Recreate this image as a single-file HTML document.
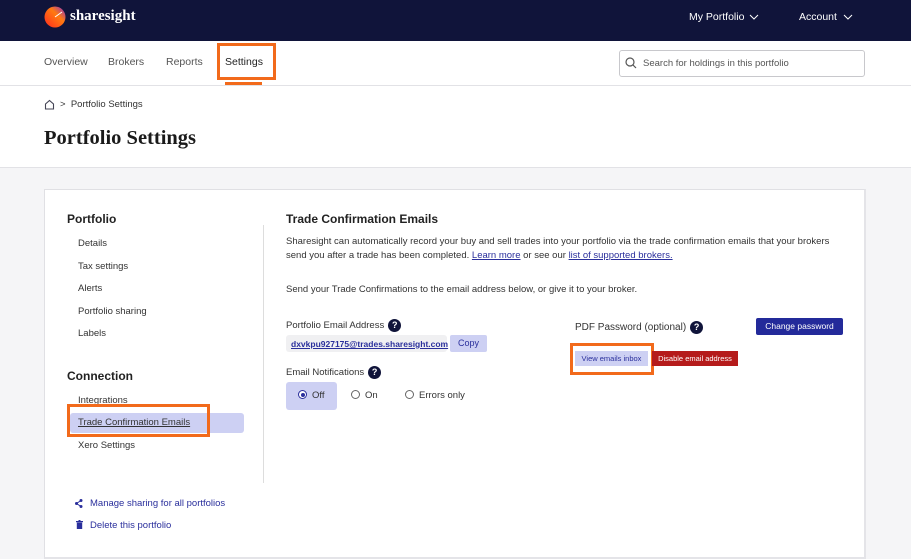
<!DOCTYPE html>
<html><head><style>
*{margin:0;padding:0;box-sizing:border-box}
body{width:911px;height:559px;overflow:hidden;font-family:"Liberation Sans",sans-serif;background:#f5f5f7;position:relative;color:#222}
.a{position:absolute;white-space:nowrap}
.hdr{position:absolute;left:0;top:0;width:911px;height:41px;background:#10143a}
.nav{position:absolute;left:0;top:41px;width:911px;height:45px;background:#fff;border-bottom:1px solid #e2e2e6}
.top{position:absolute;left:0;top:86px;width:911px;height:82px;background:#fff;border-bottom:1px solid #e2e2e6}
.card{position:absolute;left:44px;top:189px;width:822px;height:370px;background:#fff;border:1px solid #e0e0e4;border-right:2px solid #e4e4e8;border-bottom:2px solid #e4e4e8}
.s{font-size:9.5px;color:#333}
.box{position:absolute;border:3px solid #f26a1b}
.q{display:inline-block;width:13px;height:13px;border-radius:50%;background:#10143a;color:#fff;font-size:9px;font-weight:bold;text-align:center;line-height:13px;vertical-align:middle;margin-left:4px}
.lk{color:#2a2f9c;text-decoration:underline}
.radio{display:inline-block;width:9px;height:9px;border:1px solid #666;border-radius:50%;vertical-align:-1px;margin-right:5px;background:#fff;position:relative}
</style></head><body>
<div class="hdr"></div>
<svg class="a" style="left:44px;top:6px" width="22" height="22" viewBox="0 0 22 22"><defs><linearGradient id="g" x1="0" y1="1" x2="1" y2="0"><stop offset="0" stop-color="#ff2a1f"/><stop offset=".6" stop-color="#ff7a10"/><stop offset="1" stop-color="#8a2bd0"/></linearGradient></defs><circle cx="11" cy="11" r="10.5" fill="url(#g)"/><path d="M11 11 L18 6" stroke="#fff" stroke-width="1"/></svg>
<div class="a" style="left:70px;top:8px;color:#fff;font-family:'Liberation Serif',serif;font-weight:bold;font-size:15px">sharesight</div>
<div class="a" style="left:689px;top:11px;color:#fff;font-size:10.5px">My Portfolio</div>
<svg class="a" style="left:749px;top:14px" width="10" height="6" viewBox="0 0 10 6"><path d="M1 1l4 4 4-4" fill="none" stroke="#fff" stroke-width="1"/></svg>
<div class="a" style="left:799px;top:11px;color:#fff;font-size:10.5px">Account</div>
<svg class="a" style="left:843px;top:14px" width="10" height="6" viewBox="0 0 10 6"><path d="M1 1l4 4 4-4" fill="none" stroke="#fff" stroke-width="1"/></svg>
<div class="nav"></div>
<div class="a" style="left:44px;top:56px;font-size:10.5px;color:#555">Overview</div>
<div class="a" style="left:108px;top:56px;font-size:10.5px;color:#555">Brokers</div>
<div class="a" style="left:166px;top:56px;font-size:10.5px;color:#555">Reports</div>
<div class="a" style="left:225px;top:56px;font-size:10.5px;color:#222">Settings</div>
<div class="box" style="left:217px;top:43px;width:59px;height:37px"></div>
<div class="a" style="left:225px;top:82px;width:37px;height:3px;background:#f26a1b"></div>
<div class="a" style="left:619px;top:50px;width:246px;height:27px;border:1px solid #c8c8cc;border-radius:3px;background:#fff"></div>
<svg class="a" style="left:625px;top:57px" width="12" height="12" viewBox="0 0 12 12"><circle cx="5" cy="5" r="4" fill="none" stroke="#555" stroke-width="1.2"/><path d="M8 8l3 3" stroke="#555" stroke-width="1.2"/></svg>
<div class="a" style="left:643px;top:58px;font-size:9.5px;color:#555">Search for holdings in this portfolio</div>
<div class="top"></div>
<svg class="a" style="left:44px;top:99px" width="11" height="11" viewBox="0 0 11 11"><path d="M1.5 5 L5.5 1.5 L9.5 5 V10 H1.5Z" fill="none" stroke="#445" stroke-width="1.1"/></svg>
<div class="a" style="left:60px;top:99px;font-size:9.5px;color:#333">&gt;&nbsp;&nbsp;Portfolio Settings</div>
<div class="a" style="left:44px;top:127px;font-family:'Liberation Serif',serif;font-weight:bold;font-size:20.5px;color:#1a1a1a">Portfolio Settings</div>
<div class="card"></div>
<div class="a" style="left:67px;top:212px;font-size:12px;font-weight:bold">Portfolio</div>
<div class="a s" style="left:78px;top:238px">Details</div>
<div class="a s" style="left:78px;top:261px">Tax settings</div>
<div class="a s" style="left:78px;top:283px">Alerts</div>
<div class="a s" style="left:78px;top:306px">Portfolio sharing</div>
<div class="a s" style="left:78px;top:328px">Labels</div>
<div class="a" style="left:67px;top:369px;font-size:12px;font-weight:bold">Connection</div>
<div class="a s" style="left:78px;top:395px">Integrations</div>
<div class="a" style="left:70px;top:413px;width:174px;height:20px;background:#cdd0f3;border-radius:3px"></div>
<div class="a s" style="left:78px;top:417px;text-decoration:underline">Trade Confirmation Emails</div>
<div class="box" style="left:67px;top:404px;width:143px;height:33px"></div>
<div class="a s" style="left:78px;top:440px">Xero Settings</div>
<div class="a" style="left:263px;top:225px;width:1px;height:258px;background:#ddd"></div>
<svg class="a" style="left:75px;top:499px" width="8" height="9" viewBox="0 0 8 9"><circle cx="6" cy="1.5" r="1.5" fill="#2a2f9c"/><circle cx="1.5" cy="4.5" r="1.5" fill="#2a2f9c"/><circle cx="6" cy="7.5" r="1.5" fill="#2a2f9c"/><path d="M6 1.5L1.5 4.5 6 7.5" stroke="#2a2f9c" fill="none"/></svg>
<div class="a" style="left:90px;top:498px;font-size:9.5px;color:#2a2f9c">Manage sharing for all portfolios</div>
<svg class="a" style="left:76px;top:520px" width="7" height="9" viewBox="0 0 7 9"><rect x="0" y="1" width="7" height="1.2" fill="#2a2f9c"/><rect x="2.5" y="0" width="2" height="1" fill="#2a2f9c"/><rect x="0.8" y="2.5" width="5.4" height="6.5" fill="#2a2f9c"/></svg>
<div class="a" style="left:90px;top:520px;font-size:9.5px;color:#2a2f9c">Delete this portfolio</div>
<div class="a" style="left:286px;top:212px;font-size:12px;font-weight:bold">Trade Confirmation Emails</div>
<div class="a" style="left:286px;top:235px;font-size:9.5px;line-height:13.5px;color:#333;white-space:normal;width:560px">Sharesight can automatically record your buy and sell trades into your portfolio via the trade confirmation emails that your brokers send you after a trade has been completed. <span class="lk">Learn more</span> or see our <span class="lk">list of supported brokers.</span></div>
<div class="a s" style="left:286px;top:284px">Send your Trade Confirmations to the email address below, or give it to your broker.</div>
<div class="a s" style="left:286px;top:319px">Portfolio Email Address<span class="q">?</span></div>
<div class="a" style="left:286px;top:335px;width:161px;height:17px;background:#f0f0f2;border-radius:3px"></div>
<div class="a" style="left:291px;top:339px;font-size:8.5px;font-weight:bold;color:#2a2f9c;text-decoration:underline">dxvkpu927175@trades.sharesight.com</div>
<div class="a" style="left:450px;top:335px;width:37px;height:17px;background:#cdd0f3;border-radius:2px;font-size:9px;color:#2a2f9c;text-align:center;line-height:17px">Copy</div>
<div class="a s" style="left:286px;top:366px">Email Notifications<span class="q">?</span></div>
<div class="a" style="left:286px;top:382px;width:51px;height:28px;background:#cdd0f3;border-radius:3px"></div>
<div class="a s" style="left:298px;top:390px"><span class="radio" style="border-color:#2a2f9c"><span style="position:absolute;left:1.5px;top:1.5px;width:4px;height:4px;border-radius:50%;background:#2a2f9c"></span></span>Off</div>
<div class="a s" style="left:351px;top:390px"><span class="radio"></span>On</div>
<div class="a s" style="left:405px;top:390px"><span class="radio"></span>Errors only</div>
<div class="a" style="left:575px;top:321px;font-size:10px;color:#333">PDF Password (optional)<span class="q">?</span></div>
<div class="a" style="left:756px;top:318px;width:87px;height:17px;background:#232a9a;border-radius:2px;color:#fff;font-size:8.5px;text-align:center;line-height:17px">Change password</div>
<div class="a" style="left:575px;top:351px;width:73px;height:15px;background:#cdd0f3;font-size:7.5px;color:#2a2f9c;text-align:center;line-height:15px">View emails inbox</div>
<div class="box" style="left:570px;top:343px;width:84px;height:32px"></div>
<div class="a" style="left:652px;top:351px;width:86px;height:15px;background:#b51b1b;font-size:7.5px;color:#fff;text-align:center;line-height:15px">Disable email address</div>
</body></html>
